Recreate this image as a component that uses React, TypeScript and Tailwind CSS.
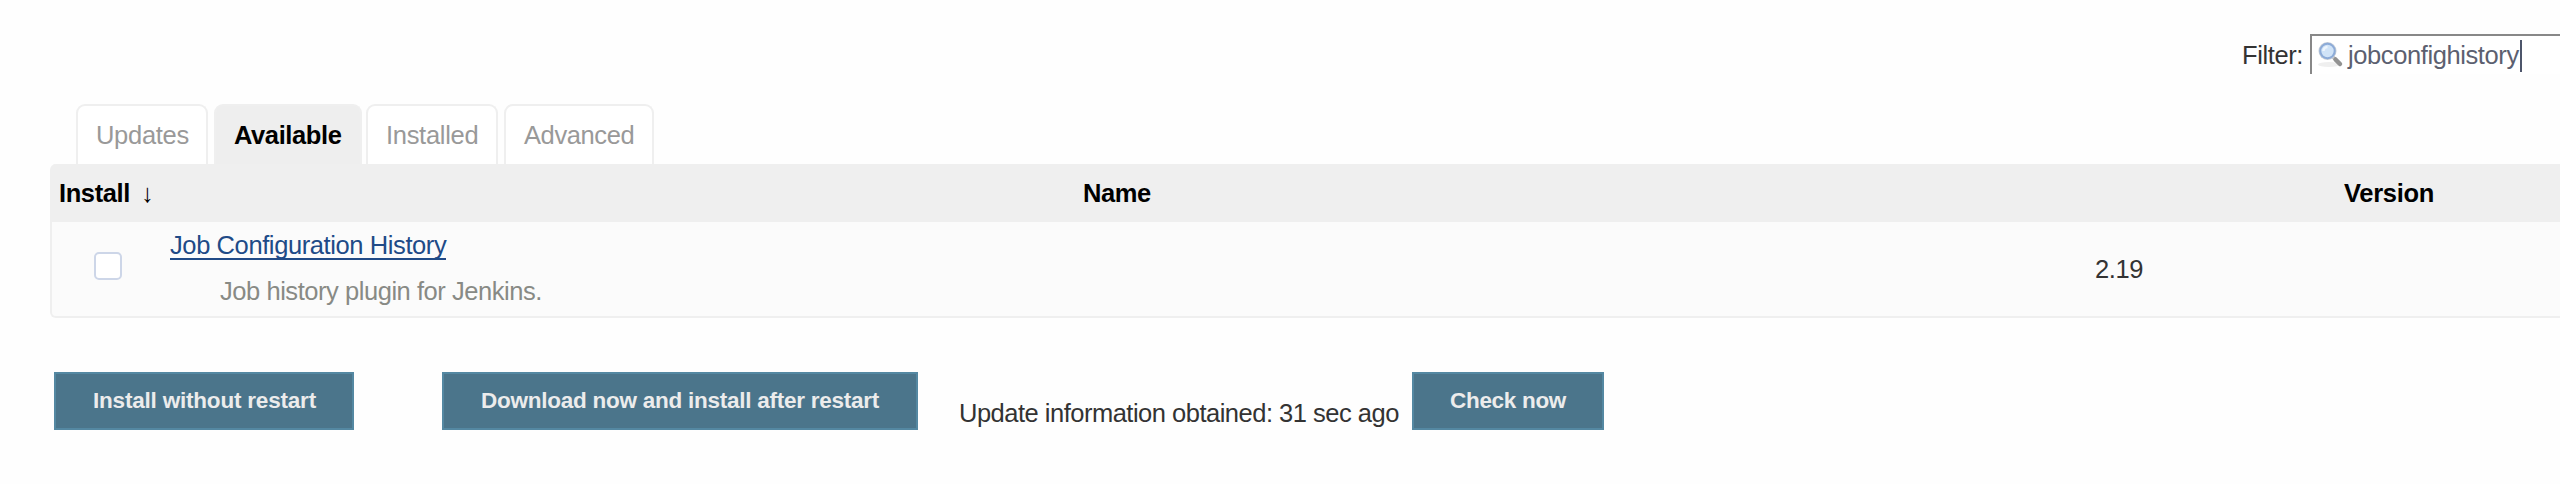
import React from "react";

const tabs = [
  { label: "Updates", box: "w-[132px] mr-1.5 pl-[18px]", text: "tracking-[-0.3px]" },
  { label: "Available", box: "w-[148px] mr-1 pl-[18px]", text: "tracking-[-0.4px]", active: true },
  { label: "Installed", box: "w-[132px] mr-1.5 pl-[18px]", text: "tracking-[-0.3px]" },
  { label: "Advanced", box: "w-[150px] pl-[18px]", text: "tracking-[-0.4px]" },
];

function SearchIcon() {
  return (
    <svg className="mt-1 ml-1 h-7 w-7 shrink-0" viewBox="0 0 28 28">
      <ellipse cx="13" cy="24.5" rx="11" ry="2.5" fill="#efefef" />
      <path d="M17 17 L19 19" stroke="#c4c4c4" strokeWidth="3.5" />
      <path d="M19.5 19.5 L24 24" stroke="#929292" strokeWidth="4.5" strokeLinecap="round" />
      <circle cx="11.5" cy="11" r="9" fill="#c5ccd6" />
      <circle cx="11.5" cy="11" r="7.2" fill="#d0e3f7" stroke="#8cabd8" strokeWidth="2" />
      <path d="M7.5 11 A4 4 0 0 1 11.5 7" stroke="#edf5fd" strokeWidth="2.5" fill="none" />
    </svg>
  );
}

function Button({ label, className, text }: { label: string; className: string; text: string }) {
  return (
    <button className={`h-[58px] shrink-0 border-2 border-[#5488a2] bg-[#4b758b] pb-px text-left text-[22.5px] leading-[30px] font-bold text-[#ececec] ${className}`}>
      <span className={`block ${text}`}>{label}</span>
    </button>
  );
}

export default function App() {
  return (
    <div className="h-[484px] w-[2560px] overflow-hidden bg-[#fefefe] pt-[34px] font-['Liberation_Sans',Arial,sans-serif] text-[25.5px] leading-[30px] whitespace-nowrap text-[#333]">
      <div className="flex h-[70px] justify-end">
        <span className="mt-1.5 w-[68px] tracking-[-0.4px]">Filter:</span>
        <div className="flex h-10 w-[250px] border-t-2 border-l-2 border-[#888] bg-white">
          <SearchIcon />
          <span className="mt-1 ml-1 w-[172px] tracking-[-0.4px] text-[#5c6070]">jobconfighistory</span>
          <span className="mt-1 h-8 w-0.5 bg-[#4e566b]" />
        </div>
      </div>

      <div className="ml-[76px] flex h-[60px]">
        {tabs.map((t) => (
          <div
            key={t.label}
            className={`rounded-t-[9px] border-2 border-b-0 border-[#efefef] pt-3.5 ${t.box} ${
              t.active ? "bg-[#eee] font-bold text-black" : "bg-white text-[#999]"
            }`}
          >
            <span className={t.text}>{t.label}</span>
          </div>
        ))}
      </div>

      <div className="ml-[50px] h-[154px] rounded-l-[6px] border-b-2 border-l-2 border-[#efefef] bg-[#fbfbfb]">
        <div className="flex h-[58px] rounded-tl-[4px] bg-[#efefef] pt-3.5 font-bold text-black">
          <div className="flex w-[1031px] pl-[7px]">
            <span className="w-[82px] tracking-[-0.4px]">Install</span>
            <span>↓</span>
          </div>
          <span className="w-[1261px] tracking-[-0.4px]">Name</span>
          <span className="tracking-[-0.3px]">Version</span>
        </div>
        <div className="flex h-[94px]">
          <div className="mt-[30px] ml-[42px] h-7 w-7 rounded-[5px] border-2 border-[#cdd6e8] bg-white" />
          <div className="ml-[48px] w-[1925px] pt-2">
            <a className="block h-[30px] w-[276px] border-b-2 border-[#204a87] tracking-[-0.4px] text-[#204a87]">Job Configuration History</a>
            <p className="mt-4 ml-[50px] tracking-[-0.45px] text-[#888a85]">Job history plugin for Jenkins.</p>
          </div>
          <span className="mt-8 tracking-[-0.4px]">2.19</span>
        </div>
      </div>

      <div className="mt-[54px] ml-[54px] flex">
        <Button label="Install without restart" className="w-[300px] pl-[37px]" text="tracking-[-0.2px]" />
        <Button label="Download now and install after restart" className="ml-[88px] w-[476px] pl-[37px]" text="tracking-[-0.25px]" />
        <span className="mt-[26px] ml-[41px] w-[453px] tracking-[-0.5px]">Update information obtained: 31 sec ago</span>
        <Button label="Check now" className="w-[192px] pl-9" text="tracking-[-0.3px]" />
      </div>
    </div>
  );
}
